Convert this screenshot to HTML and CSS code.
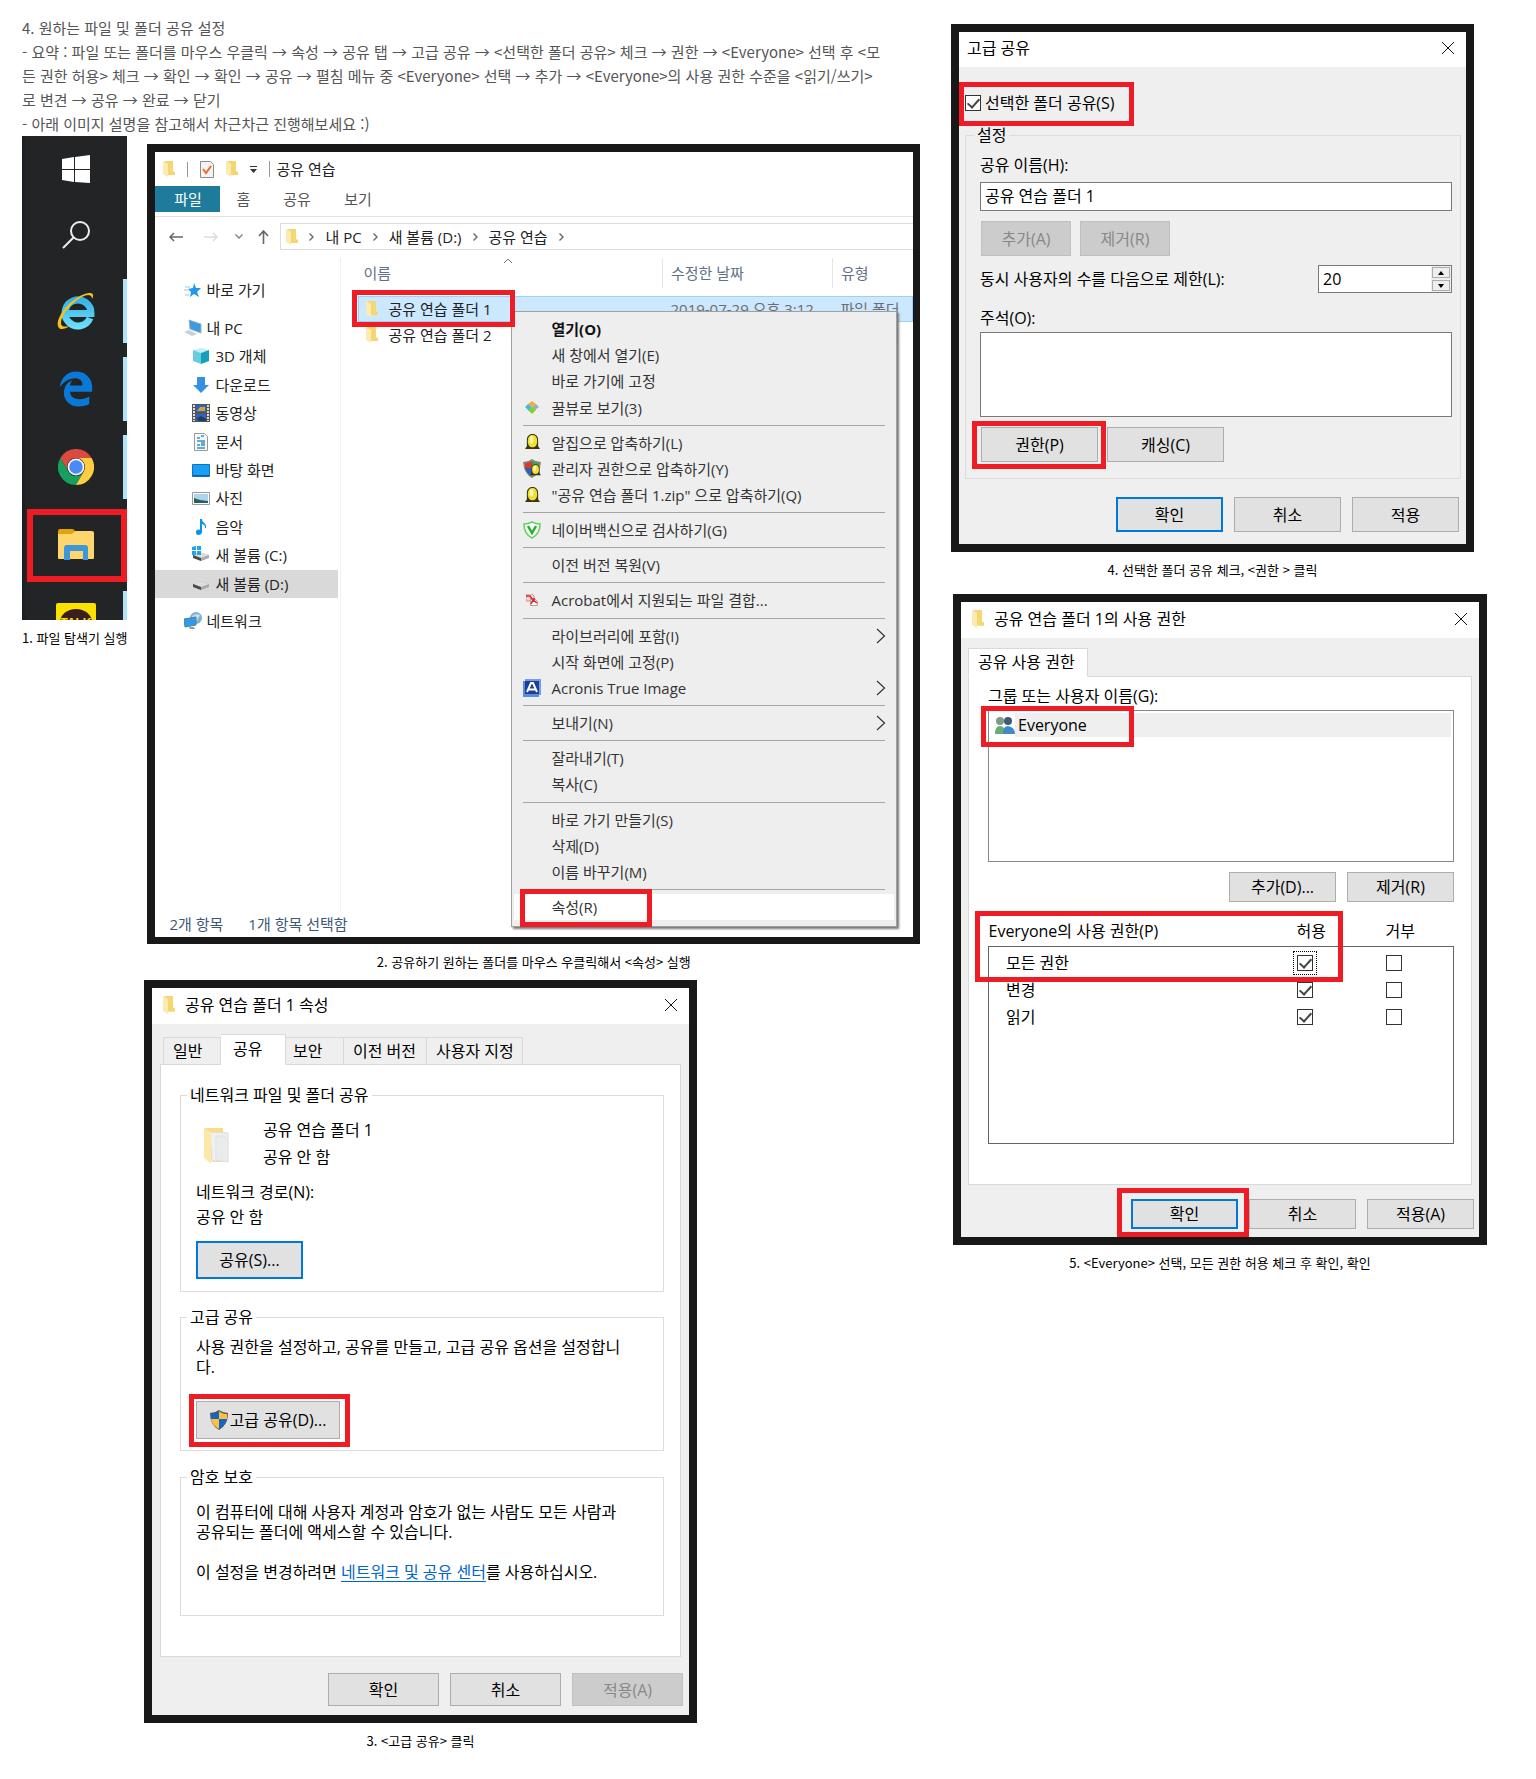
FILE: index.html
```html
<!DOCTYPE html>
<html lang="ko">
<head>
<meta charset="utf-8">
<meta name="viewport" content="width=device-width, initial-scale=1">
<title>파일 및 폴더 공유 설정</title>
<link rel="stylesheet" href="styles.css">
</head>
<body>
<svg class="sprite" aria-hidden="true">
  <symbol id="folder" viewBox="0 0 12 16"><path d="M1 0h9v10l2 1v3H4z" fill="#f6d671"/><path d="M0 1l1-1 4 3v13l-5-3z" fill="#fdeab0"/></symbol>
  <symbol id="close" viewBox="0 0 12 12"><path d="M0 0l12 12M12 0L0 12" stroke="#111" fill="none"/></symbol>
  <symbol id="chev" viewBox="0 0 5 8"><path d="M.5.5L4 4 .5 7.500" stroke="#666" stroke-width="1.400" fill="none"/></symbol>
  <symbol id="sub" viewBox="0 0 10 16"><path d="M1 1l7.500 7L1 15" stroke="#333" stroke-width="1.200" fill="none"/></symbol>
  <symbol id="egg" viewBox="0 0 16 18"><path d="M0 16l2-3V6c0-4 3-6 6-6s6 2 6 6v7l2 3z" fill="#3a3519"/><path d="M3 7c0-4 2-6 5-6s5 2 5 6c0 5-2 7-5 7S3 12 3 7z" fill="#f1df31"/><ellipse cx="7" cy="6" rx="2" ry="4" fill="#fdf8a8"/></symbol>
  <symbol id="drive" viewBox="0 0 18 18"><path d="M1 9l6-3 10 3v3l-8 3-8-4z" fill="#a9a9a9"/><path d="M1 9l6-3 10 3-8 3z" fill="#dedede"/><path d="M1 9l8 3v3l-8-3z" fill="#4a4a4a"/></symbol>
</svg>

<main class="page">
  <div class="col">
    <div class="intro">
      <p>4. 원하는 파일 및 폴더 공유 설정</p>
      <p>- 요약 : 파일 또는 폴더를 마우스 우클릭 → 속성 → 공유 탭 → 고급 공유 → &lt;선택한 폴더 공유&gt; 체크 → 권한 → &lt;Everyone&gt; 선택 후 &lt;모든 권한 허용&gt; 체크 → 확인 → 확인 → 공유 → 펼침 메뉴 중 &lt;Everyone&gt; 선택 → 추가 → &lt;Everyone&gt;의 사용 권한 수준을 &lt;읽기/쓰기&gt;로 변견 → 공유 → 완료 → 닫기</p>
      <p>- 아래 이미지 설명을 참고해서 차근차근 진행해보세요 :)</p>
    </div>

    <div class="first-steps">
      <figure class="step step-taskbar">
        <div class="taskbar">
          <div class="task task-short"><svg width="28" height="28" viewBox="0 0 28 28"><path d="M0 4l12-2v12H0zM13 2l15-2v14H13zM0 15h12v12L0 25zM13 15h15v13l-15-1z" fill="#fff"/></svg></div>
          <div class="task task-short"><svg width="28" height="28" viewBox="0 0 28 28"><g fill="none" stroke="#eee" stroke-width="2"><circle cx="18" cy="10" r="9"/><path d="M12 16L1 27"/></g></svg></div>
          <div class="task running"><svg width="40" height="40" viewBox="0 0 40 40"><defs><linearGradient id="ie" gradientUnits="userSpaceOnUse" x1="0" y1="4" x2="0" y2="38"><stop stop-color="#2fa9e4"/><stop offset="1" stop-color="#6fe3fb"/></linearGradient></defs><path d="M34 27A13 13 0 1 1 35 22.500H11" stroke="url(#ie)" stroke-width="7" fill="none"/><path d="M36 8C40 1 33 0 24 5 11 12 0 27 2 35c1 5 7 3 12 0-5 1-8 1-9-2C4 26 13 14 24 7c7-4 12-4 12 1z" fill="#f5c21b"/></svg></div>
          <div class="task running"><svg width="36" height="36" viewBox="0 0 512 512"><path fill="#0a78d7" d="M486.290 243.670c0-44-7.760-84.460-28.810-122.400C416.500 47.880 343.910 8 258.890 8 119 7.720 40.620 113.210 26.060 227.680c42.420-61.310 117.070-121.380 220.370-125 0 0 109.670 0 99.420 105H170c6.370-37.390 18.550-59 34.340-78.930-75.050 34.900-121.850 96.100-120.750 188.320.83 71.450 50.130 144.840 120.750 172 83.350 31.840 192.770 7.200 240.130-21.330V363.310C363.600 419.800 173.600 424.230 172.210 295.740H486.290z"/></svg></div>
          <div class="task running"><svg width="36" height="36" viewBox="0 0 36 36"><path d="M2.400 9A18 18 0 0 1 33.600 9H18A9 9 0 0 0 10.200 22.500z" fill="#dc4a3f"/><path d="M2.400 9A18 18 0 0 0 18 36l7.800-13.500a9 9 0 0 1-15.600 0z" fill="#17a05d"/><path d="M33.600 9A18 18 0 0 1 18 36l7.800-13.500A9 9 0 0 0 18 9z" fill="#ffcd42"/><circle cx="18" cy="18" r="8.500" fill="#f1f1f1"/><circle cx="18" cy="18" r="6.700" fill="#4a8af4"/></svg></div>
          <div class="task running"><svg width="36" height="32" viewBox="0 0 36 32"><path d="M0 2q0-2 2-2h12q2 0 3 2l-2 4H0z" fill="#e2a20c"/><path d="M0 5h14l3-3h17q2 0 2 2v25q0 1-1 1H1q-1 0-1-1z" fill="#fed66b"/><path d="M6 31V19q0-3 3-3h18q3 0 3 3v12h-5v-9H12v9z" fill="#3d97dd"/></svg><span class="mark mark-task"></span></div>
          <div class="task running"><svg width="40" height="40" viewBox="0 0 40 40"><rect width="40" height="40" rx="2" fill="#fae100"/><ellipse cx="20" cy="19" rx="16" ry="13" fill="#3c1e1e"/><text x="20" y="24" text-anchor="middle" class="talk">TALK</text></svg></div>
        </div>
        <figcaption>1. 파일 탐색기 실행</figcaption>
      </figure>

      <figure class="step step-explorer">
        <div class="shot explorer">
          <div class="ex-title">
            <svg width="12" height="16"><use href="#folder"/></svg><i class="bar"></i>
            <svg width="14" height="17" viewBox="0 0 14 17"><path d="M.5.5h10l3 3v13H.5z" fill="#f3f3f3" stroke="#8c8c8c"/><path d="M3 8l3 4 5-7" stroke="#ec6a2c" stroke-width="2" fill="none"/></svg>
            <svg width="12" height="16"><use href="#folder"/></svg>
            <svg width="7" height="7" viewBox="0 0 7 7"><path d="M0 0h7v1H0zM0 3h7L3.500 7z" fill="#333"/></svg>
            <span class="ex-name">공유 연습</span>
          </div>
          <div class="ex-tabs"><button class="ex-file">파일</button><button>홈</button><button>공유</button><button>보기</button></div>
          <div class="ex-address">
            <div class="ex-history">
              <button aria-label="뒤로"><svg width="14" height="10" viewBox="0 0 14 10"><path d="M14 5H1M5 1L1 5l4 4" stroke="#666" stroke-width="1.500" fill="none"/></svg></button>
              <button aria-label="앞으로"><svg width="14" height="10" viewBox="0 0 14 10"><path d="M0 5h13M9 1l4 4-4 4" stroke="#ddd" stroke-width="1.500" fill="none"/></svg></button>
              <button aria-label="최근"><svg width="8" height="5" viewBox="0 0 8 5"><path d="M.5.5L4 4 7.500.5" stroke="#888" stroke-width="1.500" fill="none"/></svg></button>
              <button aria-label="위로"><svg width="11" height="14" viewBox="0 0 11 14"><path d="M5.500 14V1M1 6l4.500-5L10 6" stroke="#666" stroke-width="1.600" fill="none"/></svg></button>
            </div>
            <div class="ex-crumbs">
              <svg width="12" height="16"><use href="#folder"/></svg>
              <svg width="5" height="8"><use href="#chev"/></svg><span>내 PC</span>
              <svg width="5" height="8"><use href="#chev"/></svg><span>새 볼륨 (D:)</span>
              <svg width="5" height="8"><use href="#chev"/></svg><span>공유 연습</span>
              <svg width="5" height="8"><use href="#chev"/></svg>
            </div>
          </div>
          <div class="ex-main">
            <nav class="ex-nav">
              <a href="#" class="top"><svg width="18" height="18" viewBox="0 0 18 18"><path d="M10 2l2 5 5 0-4 4 2 5-5-3-4 3 1-5-3-3 5-1z" fill="#2196ea"/><path d="M1 6h5M0 9h4M1 14h4" stroke="#8ccbf4"/></svg>바로 가기</a>
              <ul>
                <li><a href="#" class="top"><svg width="18" height="18" viewBox="0 0 18 18"><path d="M5 1l12 4v9L6 10z" fill="#3a9be0" stroke="#9db3c4"/><path d="M0 13l5-2 8 4-5 2z" fill="#c9d0d6"/></svg>내 PC</a></li>
                <li><a href="#"><svg width="18" height="18" viewBox="0 0 18 18"><path d="M9 1l8 2-8 3-8-3z" fill="#c5eef5"/><path d="M1 3l8 3v11l-8-3z" fill="#65cfe0"/><path d="M17 3L9 6v11l8-3z" fill="#149fba"/></svg>3D 개체</a></li>
                <li><a href="#"><svg width="18" height="18" viewBox="0 0 18 18"><path d="M5 1h8v8h4l-8 8-8-8h4z" fill="#3490e0"/></svg>다운로드</a></li>
                <li><a href="#"><svg width="18" height="18" viewBox="0 0 18 18"><path d="M0 0h18v18H0z" fill="#555"/><path d="M2 1v16M16 1v16" stroke="#ddd" stroke-width="2" stroke-dasharray="2 1"/><path d="M4 1h10v7H4zM4 10h10v7H4z" fill="#2a62c9"/><path d="M8 3h5v4H5z" fill="#d8a32c"/><path d="M5 14l4-2 5 3v2H6z" fill="#243f55"/></svg>동영상</a></li>
                <li><a href="#"><svg width="18" height="18" viewBox="0 0 18 18"><path d="M2.500.5h10l3 3v14h-13z" fill="#f7f7f7" stroke="#999"/><path d="M5 5h3M9 3h3M5 8h8M5 12h3M5 15h8" stroke="#3092d8" stroke-width="1.500"/><path d="M9 9h4v4H9z" fill="#68aacb"/></svg>문서</a></li>
                <li><a href="#"><svg width="18" height="18" viewBox="0 0 18 18"><path d="M.5 3.500h17v12H.5z" fill="#18a0f8" stroke="#0c73bd"/><path d="M1 14.500h16" stroke="#0b5c9b"/></svg>바탕 화면</a></li>
                <li><a href="#"><svg width="18" height="18" viewBox="0 0 18 18"><path d="M.5 3.500h17v12H.5z" fill="#fff" stroke="#999"/><path d="M2 5h14v9H2z" fill="#a9d5f1"/><path d="M2 9l6 2 8 1v2H2z" fill="#2d5f57"/></svg>사진</a></li>
                <li><a href="#"><svg width="18" height="18" viewBox="0 0 18 18"><path d="M8 1h2c0 4 5 4 4 9h-1c0-3-1-3-3-4v8c0 4-7 4-6 0 0-2 2-3 4-2z" fill="#0d92ea"/></svg>음악</a></li>
                <li><a href="#"><svg width="18" height="18" viewBox="0 0 18 18"><use href="#drive" width="18" height="18"/><path d="M0 1l4-1v4H0zM5 0h4v4H5zM0 5h4v4H0zM5 5h4v4H5z" fill="#1da5ec"/></svg>새 볼륨 (C:)</a></li>
                <li><a href="#" class="current"><svg width="18" height="18"><use href="#drive"/></svg>새 볼륨 (D:)</a></li>
              </ul>
              <a href="#" class="top"><svg width="18" height="18" viewBox="0 0 18 18"><circle cx="12" cy="6" r="6" fill="#7fb3d0"/><path d="M8 4q4-3 8-1l-3 6-4-2z" fill="#c8dfeb"/><path d="M0 7l12-2v8L1 15z" fill="#2d9de9" stroke="#527f9f"/><path d="M5 15h5l1 2H6z" fill="#999"/></svg>네트워크</a>
            </nav>
            <table class="ex-files">
              <thead><tr><th>이름</th><th><svg class="sort" width="10" height="6" viewBox="0 0 10 6"><path d="M1 5l4-4 4 4" stroke="#777" fill="none"/></svg>수정한 날짜</th><th>유형</th></tr></thead>
              <tbody>
                <tr class="selected"><td><div class="file"><svg width="12" height="16"><use href="#folder"/></svg>공유 연습 폴더 1<span class="mark mark-file"></span></div></td><td>2019-07-29 오후 3:12</td><td>파일 폴더</td></tr>
                <tr><td><div class="file"><svg width="12" height="16"><use href="#folder"/></svg>공유 연습 폴더 2</div></td><td>2019-07-29 오후 3:12</td><td>파일 폴더</td></tr>
              </tbody>
            </table>
          </div>
          <div class="ex-status"><span>2개 항목</span><span>1개 항목 선택함</span></div>

          <div class="menu" role="menu">
            <button role="menuitem"><b>열기(O)</b></button>
            <button role="menuitem"><span>새 창에서 열기(E)</span></button>
            <button role="menuitem"><span>바로 가기에 고정</span></button>
            <button role="menuitem"><svg width="14" height="13" viewBox="0 0 14 13"><path d="M7 0l4 3-4 3-4-3z" fill="#f1ae38"/><path d="M3 3l4 3-3 4-4-4z" fill="#4bb4e8"/><path d="M11 3l3 3-4 3-3-3z" fill="#a9a9b4"/><path d="M7 6l4 3-4 4-4-4z" fill="#7ed234"/></svg><span>꿀뷰로 보기(3)</span></button>
            <hr>
            <button role="menuitem"><svg width="15" height="17"><use href="#egg"/></svg><span>알집으로 압축하기(L)</span></button>
            <button role="menuitem"><svg width="18" height="19" viewBox="0 0 18 19"><path d="M9 0q4 3 9 3-1 12-9 16Q1 15 0 3q5 0 9-3z" fill="#888"/><path d="M9 2v7H2V4q4 0 7-2z" fill="#d13b30"/><path d="M9 2v7h7V4q-4 0-7-2z" fill="#3fa050"/><path d="M9 17V9H2q1 5 7 8z" fill="#2c5fb6"/><use href="#egg" x="7" y="5" width="11" height="13"/></svg><span>관리자 권한으로 압축하기(Y)</span></button>
            <button role="menuitem"><svg width="15" height="17"><use href="#egg"/></svg><span>"공유 연습 폴더 1.zip" 으로 압축하기(Q)</span></button>
            <hr>
            <button role="menuitem"><svg width="18" height="18" viewBox="0 0 18 18"><path d="M9 1q4 2 8 2 0 10-8 14Q1 13 1 3q4 0 8-2z" fill="#fff" stroke="#5fd35a" stroke-width="1.500"/><path d="M5 5l4 7 4-7" stroke="#24b32a" stroke-width="2.500" fill="none"/></svg><span>네이버백신으로 검사하기(G)</span></button>
            <hr>
            <button role="menuitem"><span>이전 버전 복원(V)</span></button>
            <hr>
            <button role="menuitem"><svg width="12" height="12" viewBox="0 0 12 12"><path d="M0 0h6l2 2v5H0z" fill="#f3dada" stroke="#d98a8a"/><path d="M4.500 4.500h4l3 3v4h-7z" fill="#f5f5f5" stroke="#b9a0a0"/><path d="M0 2h4l2 3h3M5 10l2-4 4 3" stroke="#d52a2a" stroke-width="1.500" fill="none"/></svg><span>Acrobat에서 지원되는 파일 결합...</span></button>
            <hr>
            <button role="menuitem"><span>라이브러리에 포함(I)</span><svg class="arrow" width="10" height="16"><use href="#sub"/></svg></button>
            <button role="menuitem"><span>시작 화면에 고정(P)</span></button>
            <button role="menuitem"><svg width="18" height="18" viewBox="0 0 18 18"><path d="M2 0h16v16H2z" fill="#6fa0e8"/><path d="M0 2h16v16H0z" fill="#5a8ddc"/><path d="M2 2h14v13H2z" fill="#1c3f95"/><path d="M4 13L8 4h2l4 9M6 10.500h6" stroke="#fff" stroke-width="2" fill="none"/></svg><span>Acronis True Image</span><svg class="arrow" width="10" height="16"><use href="#sub"/></svg></button>
            <hr>
            <button role="menuitem"><span>보내기(N)</span><svg class="arrow" width="10" height="16"><use href="#sub"/></svg></button>
            <hr>
            <button role="menuitem"><span>잘라내기(T)</span></button>
            <button role="menuitem"><span>복사(C)</span></button>
            <hr>
            <button role="menuitem"><span>바로 가기 만들기(S)</span></button>
            <button role="menuitem"><span>삭제(D)</span></button>
            <button role="menuitem"><span>이름 바꾸기(M)</span></button>
            <hr>
            <button role="menuitem" class="hover"><span>속성(R)</span><i class="mark mark-menu"></i></button>
          </div>
        </div>
        <figcaption>2. 공유하기 원하는 폴더를 마우스 우클릭해서 &lt;속성&gt; 실행</figcaption>
      </figure>
    </div>

    <figure class="step step-properties">
      <div class="shot dialog">
        <header class="dlg-title with-icon"><svg width="12" height="18" viewBox="0 0 12 16" preserveAspectRatio="none"><use href="#folder"/></svg><span>공유 연습 폴더 1 속성</span><button class="dlg-close" aria-label="닫기"><svg width="12" height="12"><use href="#close"/></svg></button></header>
        <div class="tabs">
          <button class="tab">일반</button><button class="tab active">공유</button><button class="tab">보안</button><button class="tab">이전 버전</button><button class="tab">사용자 지정</button>
        </div>
        <div class="panel">
          <fieldset class="fs-network">
            <legend>네트워크 파일 및 폴더 공유</legend>
            <div class="share-item">
              <svg width="28" height="36" viewBox="0 0 28 36"><path d="M1 0h18v34H8z" fill="#f9dc84"/><path d="M6 4l18 1v28H8z" fill="#f0f0f0" stroke="#ddd"/><path d="M12 8h8l4 5v21l-12-2z" fill="#e9eceb" stroke="#dfe3e3"/><path d="M0 0l7 4v32l-7-6z" fill="#fce8a8"/></svg>
              <div><p>공유 연습 폴더 1</p><p>공유 안 함</p></div>
            </div>
            <p>네트워크 경로(N):</p>
            <p class="path">공유 안 함</p>
            <button class="btn tall primary">공유(S)...</button>
          </fieldset>
          <fieldset class="fs-advanced">
            <legend>고급 공유</legend>
            <p>사용 권한을 설정하고, 공유를 만들고, 고급 공유 옵션을 설정합니<br>다.</p>
            <button class="btn tall shield"><svg width="18" height="20" viewBox="0 0 18 20"><path d="M9 0q4 3 9 3 0 12-9 17Q0 15 0 3q5 0 9-3z" fill="#555"/><path d="M9 1v8H1V4q5 0 8-3zM9 9h8q-1 6-8 10z" fill="#1267c6"/><path d="M9 1v8h8V4q-5 0-8-3zM9 9H1q1 6 8 10z" fill="#fcc03c"/></svg>고급 공유(D)...<span class="mark mark-advanced"></span></button>
          </fieldset>
          <fieldset class="fs-password">
            <legend>암호 보호</legend>
            <p>이 컴퓨터에 대해 사용자 계정과 암호가 없는 사람도 모든 사람과<br>공유되는 폴더에 액세스할 수 있습니다.</p>
            <p>이 설정을 변경하려면 <a href="#">네트워크 및 공유 센터</a>를 사용하십시오.</p>
          </fieldset>
        </div>
        <footer class="dlg-foot"><button class="btn">확인</button><button class="btn">취소</button><button class="btn" disabled>적용(A)</button></footer>
      </div>
      <figcaption>3. &lt;고급 공유&gt; 클릭</figcaption>
    </figure>
  </div>

  <div class="col col-right">
    <figure class="step step-share">
      <div class="shot dialog">
        <header class="dlg-title"><span>고급 공유</span><button class="dlg-close" aria-label="닫기"><svg width="12" height="12"><use href="#close"/></svg></button></header>
        <label class="share-check"><input type="checkbox" checked>선택한 폴더 공유(S)<span class="mark mark-check"></span></label>
        <fieldset class="fs-settings">
          <legend>설정</legend>
          <label for="share-name">공유 이름(H):</label>
          <input id="share-name" class="field" type="text" value="공유 연습 폴더 1">
          <div class="buttons"><button class="btn" disabled>추가(A)</button><button class="btn" disabled>제거(R)</button></div>
          <div class="limit">
            <label for="limit">동시 사용자의 수를 다음으로 제한(L):</label>
            <div class="spinner"><input id="limit" type="text" inputmode="numeric" value="20"><div><button aria-label="증가"><svg width="6" height="4" viewBox="0 0 6 4"><path d="M0 4l3-4 3 4z"/></svg></button><button aria-label="감소"><svg width="6" height="4" viewBox="0 0 6 4"><path d="M0 0l3 4 3-4z"/></svg></button></div></div>
          </div>
          <label for="memo">주석(O):</label>
          <textarea id="memo" class="field"></textarea>
          <div class="buttons wide"><button class="btn">권한(P)<span class="mark mark-perm"></span></button><button class="btn">캐싱(C)</button></div>
        </fieldset>
        <footer class="dlg-foot"><button class="btn primary">확인</button><button class="btn">취소</button><button class="btn">적용</button></footer>
      </div>
      <figcaption>4. 선택한 폴더 공유 체크, &lt;권한 &gt; 클릭</figcaption>
    </figure>

    <figure class="step step-permission">
      <div class="shot dialog">
        <header class="dlg-title with-icon"><svg width="12" height="18" viewBox="0 0 12 16" preserveAspectRatio="none"><use href="#folder"/></svg><span>공유 연습 폴더 1의 사용 권한</span><button class="dlg-close" aria-label="닫기"><svg width="12" height="12"><use href="#close"/></svg></button></header>
        <div class="tabs"><button class="tab active">공유 사용 권한</button></div>
        <div class="panel">
          <p>그룹 또는 사용자 이름(G):</p>
          <div class="listbox">
            <div class="user"><svg width="20" height="19" viewBox="0 0 20 19"><circle cx="5" cy="5" r="4" fill="#7d9a86"/><path d="M0 18q0-8 5-8t6 8z" fill="#6bab77"/><circle cx="13" cy="5" r="4" fill="#3f5a75"/><path d="M8 18q0-8 5-8 7 1 7 8z" fill="#4389c9"/></svg><span>Everyone</span></div>
            <i class="mark mark-user"></i>
          </div>
          <div class="list-buttons"><button class="btn">추가(D)...</button><button class="btn">제거(R)</button></div>
          <div class="perm-wrap">
            <table class="perms">
              <thead><tr><th>Everyone의 사용 권한(P)</th><th>허용</th><th>거부</th></tr></thead>
              <tbody>
                <tr><td>모든 권한</td><td><input class="focus" type="checkbox" aria-label="모든 권한 허용" checked></td><td><input type="checkbox" aria-label="모든 권한 거부"></td></tr>
                <tr><td>변경</td><td><input type="checkbox" aria-label="변경 허용" checked></td><td><input type="checkbox" aria-label="변경 거부"></td></tr>
                <tr><td>읽기</td><td><input type="checkbox" aria-label="읽기 허용" checked></td><td><input type="checkbox" aria-label="읽기 거부"></td></tr>
              </tbody>
            </table>
            <i class="mark mark-table"></i>
          </div>
        </div>
        <footer class="dlg-foot"><button class="btn primary">확인<span class="mark mark-ok"></span></button><button class="btn">취소</button><button class="btn">적용(A)</button></footer>
      </div>
      <figcaption>5. &lt;Everyone&gt; 선택, 모든 권한 허용 체크 후 확인, 확인</figcaption>
    </figure>
  </div>
</main>
</body>
</html>
```
FILE: styles.css
```css
* { box-sizing: border-box; }
body {
  margin: 0;
  background: #fff;
  color: #000;
  font: 15px/24px "Noto Sans CJK KR", sans-serif;
}
p, figure, ul { margin: 0; padding: 0; }
ul { list-style: none; }
button, input, textarea { font: inherit; color: inherit; margin: 0; padding: 0; border: 0; border-radius: 0; background: none; }
svg { display: block; flex: none; }
.sprite { position: absolute; width: 0; height: 0; }

.page {
  display: grid;
  grid-template-columns: minmax(0, 898fr) minmax(0, 536fr);
  column-gap: 31px;
  align-items: start;
  padding: 16px 49px 28px 22px;
}
.intro { max-width: 862px; color: #555; }
.first-steps { display: flex; align-items: flex-start; gap: 20px; }
.col-right { padding-top: 8px; }

figcaption { margin-top: 8px; text-align: center; font-size: 13px; line-height: 20px; white-space: nowrap; }
.step-taskbar { flex: none; }
.step-explorer { flex: 1; min-width: 0; margin-top: 8px; }
.step-properties { max-width: 553px; margin: 8px 0 0 122px; }
.step-share { max-width: 523px; }
.step-permission { max-width: 534px; margin: 14px 0 0 2px; }

/* red highlight frames drawn over the controls */
.mark { position: absolute; border: 5px solid #ee1c25; pointer-events: none; z-index: 2; }
.mark-task { inset: 3px 0 2px 2px; border-width: 6px; }
.mark-file { inset: -6px -23px -5px -6px; }
.mark-menu { inset: -5px 242px -7px 6px; }
.mark-advanced { inset: -8px -11px -9px -8px; }
.mark-check { inset: -11px -19px -13px -6px; }
.mark-perm { inset: -7px -9px -8px -10px; }
.mark-user { left: -8px; top: -5px; width: 153px; height: 41px; }
.mark-table { left: -13px; top: -10px; width: 368px; height: 71px; }
.mark-ok { inset: -13px -13px -10px -16px; }

/* taskbar */
.taskbar { width: 105px; height: 484px; overflow: hidden; background: #222426; border-left: 3px solid #1b2026; }
.task { position: relative; display: flex; align-items: center; justify-content: center; height: 78px; }
.task-short { height: 66px; }
.task-short + .running { margin-top: 4px; }
.running { background: linear-gradient(#aee4fb, #aee4fb) no-repeat right center / 4px 64px; }
.talk { font: bold 12px "Liberation Sans", sans-serif; fill: #fae100; }

.shot { border: 8px solid #181818; }

/* explorer */
.explorer {
  position: relative;
  border-right-width: 7px;
  border-bottom-width: 7px;
  font: 15px/20px "Open Sans", "Noto Sans CJK KR", sans-serif;
  color: #222;
}
.ex-title { display: flex; align-items: center; gap: 12px; height: 34px; padding-left: 8px; }
.bar { width: 1px; height: 15px; background: #999; }
.ex-name { border-left: 1px solid #999; padding-left: 6px; line-height: 16px; }
.ex-tabs { display: flex; height: 31px; padding-bottom: 4px; border-bottom: 1px solid #e2e2e2; color: #555; }
.ex-tabs button { width: 61px; }
.ex-tabs button:nth-child(2) { width: 46px; }
.ex-tabs .ex-file { width: 65px; background: #1e7b9b; color: #fff; }
.ex-address { display: flex; padding: 6px 0 0; }
.ex-history { display: grid; grid-template-columns: 41px 30px 26px 28px; }
.ex-history button { display: grid; place-items: center; }
.ex-history button:last-child { padding-right: 6px; }
.ex-crumbs { flex: 1; display: flex; align-items: center; gap: 11px; height: 27px; padding-left: 5px; border: 1px solid #dcdcdc; border-right: 0; white-space: nowrap; }
.ex-main { display: flex; height: 662px; padding-top: 8px; }
.ex-nav { flex: none; width: 186px; padding: 18px 2px 0 0; border-right: 1px solid #f0f0f0; }
.ex-nav ul { display: grid; grid-auto-rows: 1fr; height: 284px; margin: 10px 0 9px; }
.ex-nav a { display: flex; align-items: center; gap: 5px; height: 28px; padding-left: 37px; color: inherit; text-decoration: none; }
.ex-nav .top { gap: 4px; padding-left: 29px; }
.ex-nav .current { background: #d9d9d9; }
.ex-files { flex: 1; margin-left: 17px; border-collapse: collapse; table-layout: fixed; align-self: flex-start; white-space: nowrap; }
.ex-files th { position: relative; height: 30px; padding: 0 0 0 8px; text-align: left; font-weight: normal; color: #607087; border-left: 1px solid #e5e5e5; }
.ex-files th:first-child { width: 304px; padding-left: 5px; border-left: 0; }
.ex-files th:nth-child(2) { width: 170px; }
.sort { position: absolute; left: -160px; top: 0; }
.ex-files tbody::before { content: ""; display: block; height: 8px; }
.ex-files td { height: 26px; padding: 0 0 0 8px; color: #6d6d6d; }
.ex-files td:first-child { padding-left: 0; color: #222; }
.selected { background: #cce8ff; outline: 1px solid #99d1ff; outline-offset: -1px; }
.file { position: relative; display: inline-flex; align-items: center; gap: 10px; height: 26px; padding-left: 8px; }
.ex-status { display: flex; gap: 25px; padding: 2px 14px 3px; color: #3f5878; }

.menu {
  position: absolute;
  left: 356px;
  top: 159px;
  display: flex;
  flex-direction: column;
  width: 386px;
  height: 616px;
  padding: 4px 2px 6px;
  background: #eee;
  border: 1px solid #a0a0a0;
  box-shadow: 2px 2px 2px #777;
  color: #333;
}
.menu button { position: relative; flex: 1; display: grid; grid-template-columns: 20px 1fr 10px; column-gap: 9px; align-items: center; justify-items: center; width: 100%; min-height: 0; padding: 0 8px; text-align: left; white-space: nowrap; }
.menu button > span, .menu button > b { grid-column: 2; grid-row: 1; justify-self: start; }
.menu b { color: #111; }
.menu .arrow { grid-column: 3; }
.menu hr { flex: none; height: 1px; margin: 4px 9px; border: 0; background: #a5a5a5; }
.menu .hover { background: #fff; }

/* dialogs */
.dialog { background: #efefef; font: 16px/20px "Open Sans", "Noto Sans CJK KR", sans-serif; color: #000; }
.dlg-title { display: flex; align-items: center; height: 36px; padding: 0 12px 2px 8px; background: #fff; }
.with-icon { gap: 10px; padding-left: 11px; }
.dlg-close { display: grid; place-items: center; margin-left: auto; }
.tabs { display: flex; align-items: flex-end; padding: 10px 11px 0; }
.tab { height: 28px; margin-bottom: -1px; padding: 0 9px; border: 1px solid #d9d9d9; border-left-width: 0; white-space: nowrap; text-align: left; }
.tab:first-child { border-left-width: 1px; }
.tab:nth-child(1), .tab:nth-child(3) { width: 58px; }
.tab:nth-child(3) { padding-left: 7px; }
.tab:nth-child(4) { width: 83px; }
.tab:nth-child(5) { width: 96px; }
.tab.active { position: relative; width: 65px; height: 31px; padding: 0 12px 2px; background: #fff; border-bottom-color: #fff; }
.panel { margin: 0 8px; border: 1px solid #d9d9d9; background: #fff; }
fieldset { min-width: 0; margin: 0; padding: 0 15px; border: 1px solid #dcdcdc; }
legend { margin-left: -9px; padding: 0 3px; }

.btn { position: relative; width: 107px; height: 30px; border: 1px solid #adadad; background: #e1e1e1; white-space: nowrap; }
.btn.primary { border: 2px solid #0078d7; }
.btn:disabled { background: #ccc; border-color: #bfbfbf; color: #888; }
.tall { height: 38px; }
.dlg-foot { display: flex; justify-content: flex-end; gap: 11px; }

.step-properties .panel { padding: 20px 16px 40px 19px; }
.fs-network { padding-top: 15px; padding-bottom: 12px; }
.share-item { display: flex; gap: 31px; margin-bottom: 15px; padding-left: 8px; }
.share-item svg { margin-top: 8px; }
.share-item p + p { margin-top: 7px; }
.path { margin: 5px 0 14px; }
.fs-advanced { margin-top: 15px; padding-top: 10px; padding-bottom: 11px; }
.fs-advanced .btn { display: flex; align-items: center; justify-content: center; gap: 2px; width: 144px; margin-top: 24px; }
.fs-password { margin-top: 16px; padding-top: 15px; padding-bottom: 33px; }
.fs-password p + p { margin-top: 20px; }
.fs-password a { color: #06c; text-underline-offset: 3px; }
.step-properties .dlg-foot { padding: 16px 6px 9px; }
.step-properties .dlg-foot .btn { width: 111px; height: 33px; }

input[type="checkbox"] { appearance: none; position: relative; flex: none; display: block; width: 16px; height: 16px; border: 1px solid #333; background: #fff; }
input[type="checkbox"]:checked::after { content: ""; position: absolute; left: 4px; top: 0; width: 5px; height: 10px; border: solid #444; border-width: 0 2px 2px 0; transform: rotate(42deg); }

.step-share .dlg-title { height: 35px; padding-bottom: 4px; }
.share-check { position: relative; display: flex; width: fit-content; align-items: center; gap: 4px; margin: 26px 0 12px 6px; }
.fs-settings { margin: 0 5px 0 6px; padding: 10px 8px 16px 14px; }
.fs-settings legend { margin-left: -6px; }
.fs-settings > label { display: block; }
.field { display: block; width: 100%; border: 1px solid #7a7a7a; background: #fff; padding: 0 4px; }
input.field { height: 29px; margin-top: 7px; padding-bottom: 4px; }
textarea.field { height: 85px; margin-top: 4px; resize: none; }
.buttons { display: flex; gap: 9px; margin-top: 10px; padding-left: 1px; }
.buttons .btn { width: 90px; height: 35px; }
.wide .btn { width: 117px; }
.limit { display: flex; align-items: center; justify-content: space-between; margin: 9px 0 15px; }
.spinner { display: flex; width: 134px; height: 28px; border: 1px solid #7a7a7a; background: #fff; }
.spinner input { flex: 1; min-width: 0; padding-left: 4px; }
.spinner div { display: grid; width: 20px; gap: 2px; padding: 1px; background: #eee; }
.spinner button { display: grid; place-items: center; border: 1px solid #adadad; }
.step-share .dlg-foot { padding: 18px 7px 12px; }
.step-share .dlg-foot .btn { height: 35px; }

.step-permission .tabs { padding-left: 7px; }
.step-permission .tab { width: 120px; height: 29px; padding: 0 9px 2px; }
.step-permission .panel { margin: 0 7px; padding: 9px 17px 40px 19px; }
.listbox { position: relative; height: 152px; margin-top: 4px; padding: 2px; border: 1px solid #828790; background: #fff; }
.user { display: flex; align-items: center; margin-left: 4px; }
.user span { flex: 1; height: 24px; padding-left: 3px; line-height: 24px; background: #efefef; }
.list-buttons { display: flex; justify-content: flex-end; gap: 11px; margin: 10px 0 19px; }
.perm-wrap { position: relative; }
.perms { width: 100%; border-collapse: collapse; table-layout: fixed; }
.perms th { height: 25px; padding: 0 0 5px; text-align: left; font-weight: normal; }
.perms th:nth-child(2) { width: 89px; }
.perms th:nth-child(3) { width: 68px; }
.perms tbody { border: 1px solid #646464; }
.perms td { height: 27px; padding: 0; vertical-align: top; line-height: 26px; }
.perms td:first-child { padding-left: 17px; }
.perms td input { margin-top: 5px; }
.perms tr:first-child td { height: 30px; padding-top: 3px; }
.perms tr:last-child td { height: 140px; }
.focus { outline: 1px dotted #000; outline-offset: 3px; }
.step-permission .dlg-foot { padding: 14px 5px 8px; }
```
